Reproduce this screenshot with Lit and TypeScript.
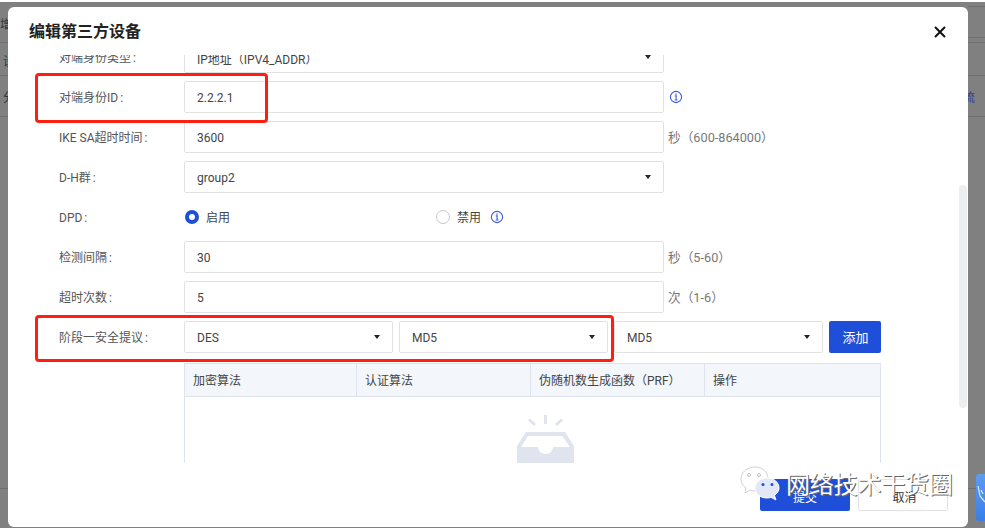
import { LitElement, html, css, svg } from "lit";
import { customElement } from "lit/decorators.js";

const info = svg`<svg class="info" width="14" height="14" viewBox="0 0 14 14" fill="none"><circle cx="7" cy="7" r="5.6" stroke="#3a5ce0" stroke-width="1.1"/><rect x="6.4" y="3.4" width="1.3" height="1.3" fill="#3a5ce0"/><path d="M5.8 5.9H7.1V9.8M5.6 10H8.5" stroke="#3a5ce0" stroke-width="1.1"/></svg>`;

@customElement("app-root")
export class AppRoot extends LitElement {
  static styles = css`
    :host { display: block; width: 985px; height: 528px; position: relative; overflow: hidden; background: #808080; font-family: Roboto, "Noto Sans CJK SC", sans-serif; font-size: 12px; color: #333; }
    .page { position: absolute; inset: 0; border-top: 2px solid #fff; }
    .bg-line { position: absolute; height: 1px; background: #6f6f6f; }
    .bg-t { position: absolute; color: #333; white-space: nowrap; }
    .bg-r { position: absolute; left: 963px; color: #2a3a9a; white-space: nowrap; }
    .bg-blue { position: absolute; left: 976px; top: 472px; width: 12px; height: 47px; border-radius: 3px; background: linear-gradient(#5c9cf2, #3a7ee6); }
    .bg-blue svg { display: block; margin: 10px 0 0 1px; }
    .modal { position: absolute; left: 8px; top: 7px; width: 960px; height: 520px; background: #fff; border-radius: 6px; display: flex; flex-direction: column; overflow: hidden; }
    .head { height: 48px; flex: none; display: flex; align-items: center; justify-content: space-between; padding: 2px 22px 0 21px; box-sizing: border-box; }
    .title { font-size: 16px; font-weight: 700; color: #222; line-height: 24px; }
    .close { display: block; }
    .body { height: 408px; flex: none; overflow: hidden; position: relative; }
    .form { margin-top: -14px; display: flex; flex-direction: column; gap: 8px; padding-left: 51px; }
    .row { display: flex; align-items: center; height: 32px; }
    .label { width: 125px; flex: none; color: #555; padding-bottom: 2px; }
    .dpd .label { padding-bottom: 0; padding-top: 1px; }
    .label::after { content: ":"; margin-left: 2px; }
    .box { box-sizing: border-box; width: 480px; height: 32px; border: 1px solid #e2e2e2; border-radius: 2px; padding: 2px 12px 0; display: flex; align-items: center; justify-content: space-between; color: #444; flex: none; }
    .box.sel { width: 209px; margin-right: 6px; }
    .caret { width: 0; height: 0; border: 3.5px solid transparent; border-top: 4px solid #222; border-bottom: 0; margin-top: -2px; }
    .hint { margin-left: 4px; color: #777; white-space: pre; font-size: 12.7px; padding-bottom: 2px; }
    .info { display: block; margin-left: 5px; }
    .dpd .info { margin-left: 9px; }
    .radio { width: 14px; height: 14px; border-radius: 50%; box-sizing: border-box; border: 1px solid #c8c8c8; margin: 0 7px 0 1px; flex: none; }
    .radio.on { border: 4px solid #1f4fd8; }
    .opt { display: flex; align-items: center; width: 251px; color: #444; }
    .opt.last { width: auto; }
    .opt span { margin-bottom: 2px; }
    .add { box-sizing: border-box; width: 52px; height: 32px; background: #1f4fd8; color: #fff; border-radius: 2px; display: flex; align-items: center; justify-content: center; flex: none; font-size: 13px; padding: 0 0 2px 1px; }
    .table { margin: 2px 0 0 125px; width: 697px; height: 110px; border: solid #dfe3ef; border-width: 1px 1px 0 1px; box-sizing: border-box; }
    .thead { box-sizing: border-box; display: grid; grid-template-columns: 172px 174px 174px 1fr; height: 33px; background: #f3f6fb; border-bottom: 1px solid #dfe3ef; }
    .th { display: flex; align-items: center; padding: 0 0 1px 8px; border-right: 1px solid #dfe3ef; color: #444; white-space: nowrap; }
    .th:last-child { border-right: 0; }
    .empty { display: flex; justify-content: center; padding: 18px 0 0 26px; }
    .foot { flex: 1; display: flex; justify-content: flex-end; gap: 8px; padding: 16px 20px 0 0; box-sizing: border-box; }
    .btn { width: 90px; height: 32px; border-radius: 2px; box-sizing: border-box; display: flex; align-items: center; justify-content: center; padding-top: 3px; }
    .btn.p { background: #1f4fd8; color: #fff; }
    .btn.c { border: 1px solid #e2e2e2; color: #333; padding-left: 3px; }
    .mark { position: absolute; border: 3px solid #ff1f10; border-radius: 4px; box-sizing: border-box; pointer-events: none; }
    .m1 { left: 35px; top: 73px; width: 233px; height: 50px; }
    .m2 { left: 35px; top: 315px; width: 579px; height: 47px; }
    .thumb { position: absolute; left: 959px; top: 185px; width: 8px; height: 223px; border-radius: 4px; background: #eceef0; }
    .wm { position: absolute; left: 740px; top: 466px; display: flex; align-items: flex-start; gap: 6px; }
    .wm svg { display: block; flex: none; }
    .wm-t { font-size: 24px; line-height: 36px; color: #fff; letter-spacing: -0.2px; white-space: nowrap; text-shadow: 1px 1px 0 #666; margin-top: 1px; }
  `;

  render() {
    return html`
      <div class="page">
        <div class="bg-line" style="left:0;top:40px;width:8px"></div>
        <div class="bg-line" style="left:0;top:73px;width:8px"></div>
        <div class="bg-line" style="left:0;top:114px;width:8px"></div>
        <div class="bg-line" style="left:0;top:486px;width:8px"></div>
        <div class="bg-line" style="left:968px;top:4px;width:17px"></div>
        <div class="bg-line" style="left:968px;top:35px;width:17px"></div>
        <div class="bg-line" style="left:968px;top:40px;width:17px"></div>
        <div class="bg-line" style="left:968px;top:73px;width:17px"></div>
        <div class="bg-line" style="left:968px;top:114px;width:17px"></div>
        <div class="bg-line" style="left:968px;top:486px;width:17px"></div>
        <div class="bg-t" style="left:0;top:13px">增</div>
        <div class="bg-t" style="left:3px;top:50px">设</div>
        <div class="bg-t" style="left:3px;top:86px">分</div>
        <div class="bg-r" style="top:86px">流</div>
        <div class="bg-blue"><svg width="9" height="24" viewBox="0 0 9 24" fill="none"><path d="M1 2 3 12 8 18M4 6 6 10" stroke="#dce9fb" stroke-width="1.200"/></svg></div>
      </div>
      <div class="modal">
        <div class="head">
          <div class="title">编辑第三方设备</div>
          <svg class="close" width="12" height="12" viewBox="0 0 12 12"><path d="M1 1 11 11M11 1 1 11" stroke="#111" stroke-width="2"/></svg>
        </div>
        <div class="body">
          <div class="form">
            <div class="row"><div class="label">对端身份类型</div><div class="box">IP地址（IPV4_ADDR）<i class="caret"></i></div></div>
            <div class="row"><div class="label">对端身份ID</div><div class="box">2.2.2.1</div>${info}</div>
            <div class="row"><div class="label">IKE SA超时时间</div><div class="box">3600</div><span class="hint">秒（600-864000）</span></div>
            <div class="row"><div class="label">D-H群</div><div class="box">group2<i class="caret"></i></div></div>
            <div class="row dpd"><div class="label">DPD</div>
              <div class="opt"><i class="radio on"></i><span>启用</span></div>
              <div class="opt last"><i class="radio"></i><span>禁用</span></div>${info}
            </div>
            <div class="row"><div class="label">检测间隔</div><div class="box">30</div><span class="hint">秒（5-60）</span></div>
            <div class="row"><div class="label">超时次数</div><div class="box">5</div><span class="hint">次（1-6）</span></div>
            <div class="row"><div class="label">阶段一安全提议</div>
              <div class="box sel">DES<i class="caret"></i></div>
              <div class="box sel">MD5<i class="caret"></i></div>
              <div class="box sel">MD5<i class="caret"></i></div>
              <div class="add">添加</div>
            </div>
            <div class="table">
              <div class="thead"><div class="th">加密算法</div><div class="th">认证算法</div><div class="th">伪随机数生成函数（PRF）</div><div class="th">操作</div></div>
              <div class="empty">
                <svg width="57" height="49" viewBox="0 0 57 49" fill="#dfe4ee">
                  <path d="M12 4.500 18 10M28.500 0V9M45 4.500 39 10" stroke="#dfe4ee" stroke-width="3" fill="none"/>
                  <path fill-rule="evenodd" d="M9 17H48L57 31V48Q57 49 56 49H1Q0 49 0 48V31ZM11 21 4 32H21C21.500 36.500 24.500 39 28.500 39C32.500 39 35.500 36.500 36 32H53L45.500 21Z"/>
                </svg>
              </div>
            </div>
          </div>
        </div>
        <div class="foot"><div class="btn p">提交</div><div class="btn c">取消</div></div>
      </div>
      <div class="thumb"></div>
      <div class="mark m1"></div>
      <div class="mark m2"></div>
      <div class="wm">
        <svg width="40" height="36" viewBox="0 0 40 36">
          <path d="M15 1C7 1 1 6.500 1 13C1 17 3 20 6 22L5 27L10 24C11.500 24.500 13 25 15 25C23 25 28 19 28 13C28 6.500 23 1 15 1Z" fill="#fff" stroke="#bbb" stroke-width=".7"/>
          <circle cx="9" cy="9" r="1.500" fill="#fff" stroke="#999" stroke-width=".6"/><circle cx="19" cy="9" r="1.500" fill="#fff" stroke="#999" stroke-width=".6"/>
          <path d="M27 12C20 12 15 16.500 15 22C15 27.500 20 32 27 32C28.500 32 30 31.800 31 31.300L36 34L34.500 29.500C37 27.500 39 25 39 22C39 16.500 34 12 27 12Z" fill="#e3e8f8" stroke="#fff"/>
          <circle cx="23" cy="18.500" r="1.500" fill="#1f4fd8"/><circle cx="32" cy="18.500" r="1.500" fill="#1f4fd8"/>
        </svg>
        <div class="wm-t">网络技术干货圈</div>
      </div>
    `;
  }
}
